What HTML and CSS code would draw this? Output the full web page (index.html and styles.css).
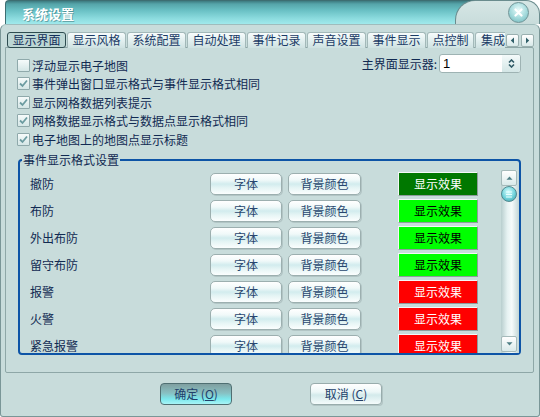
FILE: index.html
```html
<!DOCTYPE html>
<html lang="zh-CN">
<head>
<meta charset="utf-8">
<title>系统设置</title>
<link rel="stylesheet" href="styles.css">
</head>
<body>
<div class="window">
  <div class="titlebar">
    <div class="title-main"><span class="title-text">系统设置</span></div>
    <div class="title-right">
      <div class="close">
        <svg width="9" height="9" viewBox="0 0 9 9"><path d="M1.5 1.5 L7.5 7.5 M7.5 1.5 L1.5 7.5" stroke="#ffffff" stroke-width="2.2" stroke-linecap="round"/></svg>
      </div>
    </div>
  </div>
  <div class="body">
    <div class="tabs-row">
      <div class="tabs">
        <div class="tab active">显示界面</div>
        <div class="tab">显示风格</div>
        <div class="tab">系统配置</div>
        <div class="tab">自动处理</div>
        <div class="tab">事件记录</div>
        <div class="tab">声音设置</div>
        <div class="tab">事件显示</div>
        <div class="tab small">点控制</div>
        <div class="tab small cut">集成</div>
      </div>
      <div class="tab-arrows">
        <div class="tab-arrow"><svg width="5" height="7" viewBox="0 0 5 7"><path d="M4 0.5 L0.8 3.5 L4 6.5 Z" fill="#2f5f69"/></svg></div>
        <div class="tab-arrow"><svg width="5" height="7" viewBox="0 0 5 7"><path d="M1 0.5 L4.2 3.5 L1 6.5 Z" fill="#2f5f69"/></svg></div>
      </div>
    </div>
    <div class="panel">
      <div class="opt first">
        <div class="opt-left"><span class="cb"></span><span>浮动显示电子地图</span></div>
        <div class="monitor">
          <span>主界面显示器:</span>
          <div class="combo">
            <span class="val">1</span>
            <span class="spin"><svg width="7" height="9" viewBox="0 0 7 9"><path d="M1 3.5 L3.5 1 L6 3.5 M1 5.5 L3.5 8 L6 5.5" stroke="#2f5a66" stroke-width="1.6" fill="none"/></svg></span>
          </div>
        </div>
      </div>
      <div class="opt"><span class="cb"><svg width="9" height="9" viewBox="0 0 9 9"><path d="M1 4.5 L3.5 7 L8 1.5" stroke="#6c9ca1" stroke-width="1.8" fill="none"/></svg></span><span>事件弹出窗口显示格式与事件显示格式相同</span></div>
      <div class="opt"><span class="cb"><svg width="9" height="9" viewBox="0 0 9 9"><path d="M1 4.5 L3.5 7 L8 1.5" stroke="#6c9ca1" stroke-width="1.8" fill="none"/></svg></span><span>显示网格数据列表提示</span></div>
      <div class="opt"><span class="cb"><svg width="9" height="9" viewBox="0 0 9 9"><path d="M1 4.5 L3.5 7 L8 1.5" stroke="#6c9ca1" stroke-width="1.8" fill="none"/></svg></span><span>网格数据显示格式与数据点显示格式相同</span></div>
      <div class="opt"><span class="cb"><svg width="9" height="9" viewBox="0 0 9 9"><path d="M1 4.5 L3.5 7 L8 1.5" stroke="#6c9ca1" stroke-width="1.8" fill="none"/></svg></span><span>电子地图上的地图点显示标题</span></div>

      <fieldset class="group">
        <legend class="group-title">事件显示格式设置</legend>
        <div class="group-inner">
          <div class="rows">
            <div class="row"><span class="name">撤防</span><span class="btn font-btn">字体</span><span class="btn bg-btn">背景颜色</span><span class="sample dark-green">显示效果</span></div>
            <div class="row"><span class="name">布防</span><span class="btn font-btn">字体</span><span class="btn bg-btn">背景颜色</span><span class="sample green">显示效果</span></div>
            <div class="row"><span class="name">外出布防</span><span class="btn font-btn">字体</span><span class="btn bg-btn">背景颜色</span><span class="sample green">显示效果</span></div>
            <div class="row"><span class="name">留守布防</span><span class="btn font-btn">字体</span><span class="btn bg-btn">背景颜色</span><span class="sample green">显示效果</span></div>
            <div class="row"><span class="name">报警</span><span class="btn font-btn">字体</span><span class="btn bg-btn">背景颜色</span><span class="sample red">显示效果</span></div>
            <div class="row"><span class="name">火警</span><span class="btn font-btn">字体</span><span class="btn bg-btn">背景颜色</span><span class="sample red">显示效果</span></div>
            <div class="row"><span class="name">紧急报警</span><span class="btn font-btn">字体</span><span class="btn bg-btn">背景颜色</span><span class="sample red">显示效果</span></div>
          </div>
          <div class="scrollbar">
            <div class="sb-top">
              <div class="sb-arrow"><svg width="7" height="4" viewBox="0 0 7 4"><path d="M0.5 3.8 L3.5 0.5 L6.5 3.8 Z" fill="#4f7f86"/></svg></div>
              <div class="thumb"><svg width="8" height="7" viewBox="0 0 8 7"><path d="M1 1 H7 M1 3.5 H7 M1 6 H7" stroke="#e8ffff" stroke-width="1"/></svg></div>
            </div>
            <div class="sb-arrow"><svg width="7" height="4" viewBox="0 0 7 4"><path d="M0.5 0.2 L3.5 3.5 L6.5 0.2 Z" fill="#4f7f86"/></svg></div>
          </div>
        </div>
      </fieldset>
    </div>
    <div class="footer">
      <div class="dlg-btn ok">确定 (<u>O</u>)</div>
      <div class="dlg-btn cancel">取消 (<u>C</u>)</div>
    </div>
  </div>
</div>
</body>
</html>
```

FILE: styles.css
```css
* { box-sizing: border-box; }
html, body { margin: 0; padding: 0; background: #ffffff; }
body {
  font-family: "Noto Sans CJK SC", "Noto Sans", sans-serif;
  font-size: 12px;
  color: #112a52;
}
.window { width: 540px; height: 417px; }

/* title bar */
.titlebar { display: flex; height: 24px; margin-left: 5px; }
.title-main {
  flex: 1;
  margin-right: -22px;
  background: linear-gradient(#3d7b80 0, #55a4a9 3px, #68bfc3 9px, #8adadd 17px, #a4ecee 24px);
  border-top-left-radius: 4px;
  border-left: 1px solid #3d6e72;
  border-top: 1px solid #3d6e72;
  padding: 1px 0 0 16px;
  display: flex;
  align-items: center;
}
.title-text {
  color: #ffffff;
  font-weight: bold;
  font-size: 13px;
  text-shadow: 1px 1px 0 rgba(40, 90, 95, 0.45);
}
.title-right {
  flex: 0 0 85px;
  background: linear-gradient(#d6e6e5, #c8dcdb);
  border-top: 1px solid #6a8c8e;
  border-left: 1px solid #6a8c8e;
  border-right: 1px solid #6a8c8e;
  border-radius: 20px 14px 0 0;
  padding: 1px 0 0 52px;
}
.close {
  width: 21px;
  height: 21px;
  border-radius: 50%;
  border: 1px solid #6f9497;
  background: radial-gradient(circle at 50% 35%, #e8fbfb, #a2d9db 55%, #6db4b8);
  display: flex;
  align-items: center;
  justify-content: center;
}

/* body */
.body {
  height: 393px;
  background: #c8dcdb;
  border: 1px solid #7a9697;
  border-top-color: #9fbcbc;
  border-radius: 6px 6px 3px 3px;
  padding: 7px 5px 0 4px;
}

/* tabs */
.tabs-row {
  display: flex;
  height: 16px;
  margin-bottom: -1px;
  padding-left: 2px;
  position: relative;
  z-index: 1;
}
.tabs { width: 498px; display: flex; gap: 1px; overflow: hidden; }
.tab {
  flex: 0 0 59px;
  height: 16px;
  border: 1px solid #a3b9b9;
  border-bottom: none;
  border-radius: 3px 3px 0 0;
  background: linear-gradient(#f7fcfc, #e0eeee 55%, #cfe2e2);
  text-align: center;
  line-height: 14px;
  color: #1b3b66;
  white-space: nowrap;
  overflow: hidden;
}
.tab.small { flex-basis: 47px; }
.tab.cut { text-align: left; padding-left: 5px; }
.tab.active {
  background: #bcd6d4;
  border: 1px solid #2e4c50;
  border-radius: 3px;
  color: #142f5a;
}
.tab-arrows { display: flex; gap: 2px; align-items: center; padding-left: 1px; }
.tab-arrow {
  width: 13px;
  height: 13px;
  border: 1px solid #9ab0b0;
  border-radius: 2px;
  background: linear-gradient(#ffffff, #d8e9e9);
  display: flex;
  align-items: center;
  justify-content: center;
}

/* panel */
.panel {
  height: 326px;
  border: 1px solid #8ea7a7;
  border-radius: 0 2px 2px 2px;
  background: #c8dcdb;
  padding-top: 8px;
  overflow: hidden;
}
.opt {
  height: 18.5px;
  display: flex;
  align-items: center;
  padding-left: 11px;
  white-space: nowrap;
}
.opt-left { display: flex; align-items: center; }
.cb {
  width: 13px;
  height: 13px;
  border: 1px solid #8fa9ab;
  border-radius: 1px;
  background: linear-gradient(#f6fbfb, #d4e6e6);
  margin-right: 2px;
  display: flex;
  align-items: center;
  justify-content: center;
  flex: none;
}
.opt.first { justify-content: space-between; padding-right: 12px; }
.monitor { display: flex; align-items: center; gap: 2px; margin-top: -3px; }
.combo {
  width: 82px;
  height: 19px;
  border: 1px solid #9eb3b3;
  border-radius: 3px;
  background: #ffffff;
  display: flex;
  align-items: center;
  justify-content: space-between;
  padding-left: 3px;
}
.combo .val { font-family: "Liberation Sans", sans-serif; font-size: 13px; color: #000000; }
.spin {
  width: 18px;
  height: 17px;
  background: linear-gradient(#f4fafa, #d3e6e6);
  border-radius: 0 2px 2px 0;
  display: flex;
  align-items: center;
  justify-content: center;
}

/* group */
.group {
  margin: 3.5px 12px 0 12px;
  border: 2px solid #0d54a6;
  border-radius: 4px;
  padding: 2px 0 0 0;
  min-width: 0;
}
.group-title {
  padding: 0 1px;
  margin-left: 2px;
  line-height: 16px;
  font-size: 12px;
  color: #112a52;
}
.group-inner { display: flex; height: 183px; }
.rows { flex: 1; overflow: hidden; padding-top: 1px; }
.row { height: 27px; display: flex; align-items: flex-start; white-space: nowrap; }
.row .name {
  width: 190px;
  padding-left: 10px;
  padding-top: 5.5px;
  line-height: 14px;
  height: 19.5px;
}
.btn {
  height: 22px;
  margin-top: 2px;
  border: 1px solid #9cafaf;
  border-radius: 5px;
  background: linear-gradient(#ffffff 0%, #f0f9f9 30%, #d2ecee 50%, #e6f5f5 70%, #fbfefe 100%);
  box-shadow: 1px 1px 0 #b2c5c5;
  text-align: center;
  line-height: 20px;
  color: #28466e;
}
.font-btn { width: 72px; }
.bg-btn { width: 73px; margin-left: 6px; }
.sample {
  width: 80px;
  height: 24px;
  margin-top: 1px;
  margin-left: 37px;
  border: 1px solid;
  border-color: #f4f8f8 #8e9c9c #8e9c9c #f4f8f8;
  text-align: center;
  line-height: 22px;
}
.dark-green { background: #007800; color: #ffffff; }
.green { background: #00ff00; color: #000000; }
.red { background: #ff0000; color: #ffffff; }

/* scrollbar */
.scrollbar {
  width: 18px;
  display: flex;
  flex-direction: column;
  justify-content: space-between;
  padding-bottom: 1px;
  background: linear-gradient(to right, #b8cece, #e6f2f2 35%, #f6fbfb 60%, #c2d6d6);
}
.sb-top { display: flex; flex-direction: column; }
.sb-arrow {
  width: 16px;
  height: 16px;
  border: 1px solid #a5baba;
  border-radius: 2px;
  background: linear-gradient(#ffffff, #d9eaea);
  display: flex;
  align-items: center;
  justify-content: center;
}
.thumb {
  width: 16px;
  height: 16px;
  border-radius: 50%;
  border: 1px solid #4f8a90;
  background: radial-gradient(circle at 45% 35%, #d8ffff, #6fd2da 55%, #3a97a1);
  display: flex;
  align-items: center;
  justify-content: center;
}

/* footer */
.footer { display: flex; gap: 78px; padding-left: 155px; margin-top: 10px; }
.dlg-btn {
  width: 72px;
  height: 22px;
  border-radius: 4px;
  text-align: center;
  line-height: 20px;
  color: #22406a;
}
.ok {
  border: 1px solid #4f6f72;
  background: linear-gradient(#7f9fa0, #88c0c2 45%, #7be8ec 75%, #a8f4f6);
}
.cancel {
  border: 1px solid #98acac;
  background: linear-gradient(#ffffff, #ecf7f7 40%, #d3eaeb 55%, #f4fbfb);
  box-shadow: 1px 1px 0 #b2c5c5;
}
```
